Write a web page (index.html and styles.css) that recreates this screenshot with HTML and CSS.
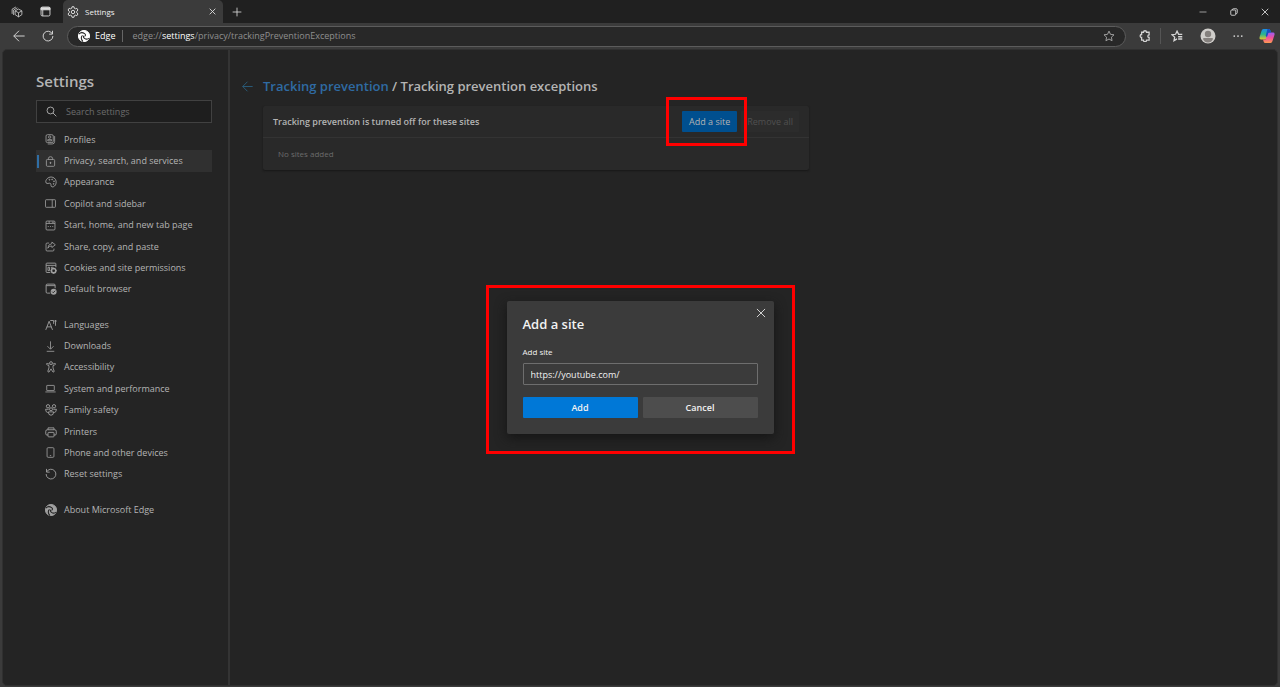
FILE: index.html
```html
<!DOCTYPE html>
<html lang="en">
<head>
<meta charset="utf-8">
<title>Settings</title>
<link rel="stylesheet" href="styles.css">
</head>
<body>
<svg class="defs" aria-hidden="true">
  <symbol id="edge" viewBox="0 0 16 16">
    <circle cx="8" cy="8" r="7.500" fill="currentColor"/>
    <path d="M1 5.500C3 3.500 6.500 3.200 8.800 4.800c2 1.500 1.200 3.200-.3 3.600M15.200 10.800c-1.800 1.400-4.700 1.600-6.600.3-1.700-1.200-1.600-2.600-.9-3.400M6 7.200C4 9 4.200 12.500 6.600 15.500" fill="none" stroke="var(--edge-gap)" stroke-width="1.400"/>
  </symbol>
  <symbol id="back" viewBox="0 0 16 16"><path d="M15.500 8H1M8 1L1 8l7 7"/></symbol>
  <symbol id="close" viewBox="0 0 16 16"><path d="M1.500 1.500l13 13M14.500 1.500l-13 13"/></symbol>
</svg>
<div class="browser">
  <header class="tabstrip">
    <button class="chrome-btn" aria-label="Workspaces"><svg class="icon i12 thin" viewBox="0 0 16 16"><path d="M5.500 6.500L10 4l4.500 2.500v5L10 14.500l-4.500-3zM5.500 6.500L10 9l4.500-2.500M10 9v5.500M3.500 12V5.300L8.500 2.400M1.500 10.500V4.200L6.500 1.300"/></svg></button>
    <button class="chrome-btn" aria-label="Tab actions"><svg class="icon i11" viewBox="0 0 16 16"><rect x="1.500" y="1.500" width="13" height="13" rx="2"/><path d="M1.500 2.500h13v3h-13z" fill="currentColor"/><path d="M4 5.500v9"/></svg></button>
    <div class="tab">
      <svg class="icon i12" viewBox="0 0 16 16"><circle cx="8" cy="8" r="2.300"/><path d="M6.700 1h2.600l.5 2.100 1.300.7 2.100-.7 1.400 2.300-1.600 1.600v2l1.600 1.600-1.400 2.300-2.100-.7-1.300.7L9.300 15H6.700l-.5-2.100-1.300-.7-2.100.7-1.400-2.300L3 9V7L1.400 5.400l1.400-2.300 2.100.7 1.300-.7z"/></svg>
      <span class="tab-title">Settings</span>
      <button class="plain tab-close" aria-label="Close tab"><svg class="icon i7"><use href="#close"/></svg></button>
    </div>
    <button class="new-tab plain" aria-label="New tab"><svg class="icon i10" viewBox="0 0 16 16"><path d="M8 1v14M1 8h14"/></svg></button>
    <div class="window-controls">
      <button class="plain" aria-label="Minimize"><svg class="icon i8" viewBox="0 0 16 16"><path d="M1 8h14"/></svg></button>
      <button class="plain" aria-label="Restore"><svg class="icon i8 bold" viewBox="0 0 16 16"><rect x="1.500" y="4" width="10" height="10.500" rx="2"/><path d="M5 4V3q0-1.500 1.500-1.500h6Q14.500 1.500 14.500 3.500v6q0 1.500-1.500 1.500h-1.500"/></svg></button>
      <button class="plain" aria-label="Close window"><svg class="icon i8 bold"><use href="#close"/></svg></button>
    </div>
  </header>
  <div class="toolbar">
    <button class="chrome-btn" aria-label="Back"><svg class="icon i12"><use href="#back"/></svg></button>
    <button class="chrome-btn" aria-label="Refresh"><svg class="icon i12" viewBox="0 0 16 16"><path d="M13.800 5.200A6.500 6.500 0 1 0 14.500 8M14 1v4.500H9.500"/></svg></button>
    <div class="address">
      <svg class="icon i12 edge-mark"><use href="#edge"/></svg>
      <span class="address-name">Edge</span>
      <span class="address-url">edge://<b>settings</b>/privacy/trackingPreventionExceptions</span>
      <button class="plain star" aria-label="Add to favorites"><svg class="icon i12" viewBox="0 0 16 16"><path d="M8 1.500l2 4.300 4.700.6-3.500 3.200.9 4.700L8 12l-4.100 2.300.9-4.700L1.300 6.400 6 5.800z"/></svg></button>
    </div>
    <div class="actions">
      <button class="plain" aria-label="Extensions"><svg class="icon i12 bold" viewBox="0 0 16 16"><path d="M3.500 3H6a2 2 0 0 1 4 0h3.500v3.500a1.600 1.600 0 1 0 0 3.500v3.500H10a2 2 0 0 1-4 0H3.500V10a2 2 0 0 1 0-4z"/></svg></button>
      <button class="plain" aria-label="Favorites"><svg class="icon i12 bold" viewBox="0 0 16 16"><path d="M8 11.800l-4 2.400.9-4.700-3.500-3.200 4.700-.6 2-4.200 2 4.200H15M9.500 9H15M9.500 12H15"/></svg></button>
      <button class="plain" aria-label="Profile"><svg class="i16" viewBox="0 0 16 16"><circle cx="8" cy="8" r="7.500" fill="#d0cecb"/><circle cx="8" cy="6" r="3.200" fill="#85817e"/><path d="M3 11q0-1 1-1h8q1 0 1 1-1.500 3.500-5 3.500T3 11z" fill="#85817e"/></svg></button>
      <button class="plain" aria-label="Settings and more"><svg class="i10" viewBox="0 0 16 16" fill="#d5d5d5"><circle cx="2" cy="8" r="1.400"/><circle cx="8" cy="8" r="1.400"/><circle cx="14" cy="8" r="1.400"/></svg></button>
      <button class="plain" aria-label="Copilot"><svg class="i16" viewBox="0 0 16 16"><defs><linearGradient id="cpa" x2="0" y2="1"><stop stop-color="#1b8ce8"/><stop offset=".5" stop-color="#28b58c"/><stop offset="1" stop-color="#e8c52c"/></linearGradient><linearGradient id="cpb" x2="0" y2="1"><stop stop-color="#9a5cf5"/><stop offset=".5" stop-color="#f0509c"/><stop offset="1" stop-color="#ff9a50"/></linearGradient></defs><path d="M4.500 1h5.200q1.300 0 1.700 1.500l.6 2H9.500L7.600 10q-.5 1.500-2 1.500H2Q0 11.500.5 9.300L2.500 3Q3 1 4.500 1z" fill="url(#cpa)"/><path d="M11.500 15H6.300q-1.300 0-1.700-1.500l-.6-2h2.500L8.400 6q.5-1.500 2-1.500H14q2 0 1.500 2.200L13.500 13q-.5 2-2 2z" fill="url(#cpb)"/><path d="M9.700 1q1.300 0 1.700 1.500l.6 2H9.500L8 9 6.600 8 8.500 1z" fill="#164fc4"/></svg></button>
    </div>
  </div>
  <div class="page">
    <aside class="sidebar">
      <h1>Settings</h1>
      <label class="search">
        <svg class="icon i11" viewBox="0 0 16 16"><circle cx="6.500" cy="6.500" r="5"/><path d="M10.200 10.200L15 15"/></svg>
        <input type="search" placeholder="Search settings" aria-label="Search settings">
      </label>
      <nav>
        <div class="group group-main">
          <a href="#"><svg class="icon i11" viewBox="0 0 16 16"><rect x="1.500" y="1" width="10.500" height="11.500" rx="2"/><circle cx="6.800" cy="4.500" r="1.700"/><path d="M4 10V8.200h5.600V10zM14 3v8q0 3.500-3.500 3.500H4"/></svg>Profiles</a>
          <a href="#" class="current" aria-current="page"><svg class="icon i11" viewBox="0 0 16 16"><rect x="2" y="5" width="12" height="10" rx="1.500"/><path d="M5 5V3.500Q5 1 8 1t3 2.500V5"/><circle cx="8" cy="10" r=".8" fill="currentColor"/></svg>Privacy, search, and services</a>
          <a href="#"><svg class="icon i12" viewBox="0 0 16 16"><path d="M1 7.500C1.500 3 6 .8 9.500 1.500c4 .8 6 4.500 5.300 8-.6 3.300-3.300 5.500-5.300 5-2.300-.5-1-3.200-2-4.300-1.400-1.500-3 .2-4.700-.3Q.8 9.500 1 7.500z"/><circle cx="6" cy="5" r=".6"/><circle cx="9.500" cy="4.500" r=".6"/><circle cx="12" cy="7" r=".6"/><circle cx="11.500" cy="10.500" r=".6"/></svg>Appearance</a>
          <a href="#"><svg class="icon i11" viewBox="0 0 16 16"><rect x=".7" y="2.500" width="14.600" height="11" rx="1"/><path d="M10.500 2.500v11"/></svg>Copilot and sidebar</a>
          <a href="#"><svg class="icon i11" viewBox="0 0 16 16"><rect x="1.500" y="1.500" width="13" height="13" rx="1.500"/><path d="M1.500 5h13M6 1.500V5M10 3.200h3M4 9.500h1.500M7.300 9.500h1.500M10.500 9.500H12"/></svg>Start, home, and new tab page</a>
          <a href="#"><svg class="icon i11" viewBox="0 0 16 16"><path d="M6 3H3Q1.500 3 1.500 4.500v8.500q0 1.500 1.500 1.500h8.500q1.500 0 1.500-1.500v-2M10 1.500l5 4-5 4V7.200Q6 7 4 10.500 4.500 4.500 10 3.800z"/></svg>Share, copy, and paste</a>
          <a href="#"><svg class="icon i12" viewBox="0 0 16 16"><path d="M7 14H2.500Q1.500 14 1.500 13V2.500q0-1 1-1h11q1 0 1 1V7M1.500 4.500h13M4 7v4.500h2V7zM8.500 9V7H11"/><circle cx="11.500" cy="11.500" r="2.900" stroke-width="2"/><path d="M11.500 7.500v2M11.500 13.500v2M7.500 11.500h2M13.500 11.500h2" stroke-width="1.600"/></svg>Cookies and site permissions</a>
          <a href="#"><svg class="icon i12" viewBox="0 0 16 16"><path d="M7 13.500H3Q1.500 13.500 1.500 12V3Q1.500 1.500 3 1.500h9Q13.500 1.500 13.500 3v4M1.500 3.500h12"/><circle cx="11.500" cy="11.500" r="4" fill="currentColor" stroke="none"/><path d="M9.500 11.500l1.500 1.500 2.600-2.700" stroke="#242424"/></svg>Default browser</a>
        </div>
        <div class="group group-more">
          <a href="#"><svg class="icon i12" viewBox="0 0 16 16"><path d="M1 14.500L5.500 3l4.500 11.500M2.500 10.500h6M7 2h4.500v4.500M14 9V1.500M14 1.500L12 3.500M14 1.500L16 3.500"/></svg>Languages</a>
          <a href="#"><svg class="icon i11" viewBox="0 0 16 16"><path d="M8 .5v11M3.500 7.500L8 12l4.500-4.500M2.500 15h11"/></svg>Downloads</a>
          <a href="#"><svg class="icon i12" viewBox="0 0 16 16"><circle cx="8" cy="2.800" r="1.900"/><path d="M5.800 4.300L3 3.200q-1.200 0-1 1.200.2.500 3.300 1.800v3L3.800 13.500q0 1.500 1.500 1.300L8 10.500l2.700 4.300q1.500.2 1.500-1.300L10.700 9.200v-3q3.100-1.300 3.300-1.800.2-1.200-1-1.200l-2.800 1.100"/></svg>Accessibility</a>
          <a href="#"><svg class="icon i11" viewBox="0 0 16 16"><rect x="2.500" y="3.500" width="11" height="7.500" rx=".5"/><path d="M.5 13h15"/></svg>System and performance</a>
          <a href="#"><svg class="icon i12" viewBox="0 0 16 16"><circle cx="4" cy="3" r="2.200"/><circle cx="12" cy="3" r="2.200"/><circle cx="8" cy="7" r="2"/><path d="M4.500 10.500h7q0 4.500-3.500 4.500t-3.500-4.500zM5 7H.8q0 4 3 4.500M11 7h4.200q0 4-3 4.500"/></svg>Family safety</a>
          <a href="#"><svg class="icon i12" viewBox="0 0 16 16"><path d="M4 12H2.500Q1 12 1 10.500V7q0-2 2-2h10q2 0 2 2v3.500q0 1.500-1.500 1.500H12M4 5V2.500h8V5"/><rect x="4" y="8.500" width="8" height="6" rx="1"/></svg>Printers</a>
          <a href="#"><svg class="icon i11" viewBox="0 0 16 16"><rect x="3" y="1" width="10" height="14" rx="1.500"/><path d="M7 12.500h2"/></svg>Phone and other devices</a>
          <a href="#"><svg class="icon i12" viewBox="0 0 16 16"><path d="M2.200 5.200A6.500 6.500 0 1 1 1.500 8M2 1.200v4.300h4.300"/></svg>Reset settings</a>
        </div>
        <div class="group">
          <a href="#"><svg class="icon i12"><use href="#edge"/></svg>About Microsoft Edge</a>
        </div>
      </nav>
    </aside>
    <main class="content">
      <div class="crumbs">
        <button class="plain crumb-back" aria-label="Back"><svg class="icon i11"><use href="#back"/></svg></button>
        <h2><a href="#">Tracking prevention</a> / Tracking prevention exceptions</h2>
      </div>
      <section class="card">
        <div class="card-head">
          <h3>Tracking prevention is turned off for these sites</h3>
          <div class="marked">
            <button class="add-site">Add a site</button>
            <div class="mark mark-button"></div>
          </div>
          <button class="remove-all" disabled>Remove all</button>
        </div>
        <p class="card-empty">No sites added</p>
      </section>
    </main>
    <div class="overlay">
      <div class="marked">
        <form class="dialog" role="dialog" aria-labelledby="dialog-title">
          <div class="dialog-head">
            <h2 id="dialog-title">Add a site</h2>
            <button type="button" class="plain" aria-label="Close"><svg class="icon i10"><use href="#close"/></svg></button>
          </div>
          <label for="site">Add site</label>
          <input id="site" type="text" value="https://youtube.com/">
          <div class="dialog-actions">
            <button type="button" class="primary">Add</button>
            <button type="button">Cancel</button>
          </div>
        </form>
        <div class="mark mark-dialog"></div>
      </div>
    </div>
  </div>
</div>
</body>
</html>
```

FILE: styles.css
```css
* { box-sizing: border-box; }

body {
  margin: 0;
  background: #3b3b3b;
  color: #b4b4b4;
  font: 9px/12px "Open Sans", "Noto Sans", sans-serif;
  --edge-gap: #242424;
}

h1, h2, h3, p { margin: 0; }
button, input { font: inherit; color: inherit; }
button { border: 0; padding: 0; }
a { color: inherit; text-decoration: none; }

.defs { position: absolute; width: 0; height: 0; }
.icon { flex: none; fill: none; stroke: currentColor; stroke-width: 1.3; }
.thin { stroke-width: 1; }
.bold { stroke-width: 1.7; }
.i7 { width: 7px; height: 7px; }
.i8 { width: 8px; height: 8px; }
.i10 { width: 10px; height: 10px; }
.i11 { width: 11px; height: 11px; }
.i12 { width: 12px; height: 12px; }
.i16 { width: 16px; height: 16px; }

.plain, .chrome-btn {
  display: flex;
  align-items: center;
  justify-content: center;
  background: none;
}
.chrome-btn { width: 28px; }

.browser { display: flex; flex-direction: column; min-height: 100vh; }

.tabstrip {
  display: flex;
  height: 23px;
  padding-left: 3px;
  background: #202020;
  color: #dedede;
}
.tab {
  display: flex;
  align-items: center;
  gap: 6px;
  width: 160px;
  margin-left: 4px;
  padding: 0 7px 0 4px;
  border-radius: 5px 5px 0 0;
  background: #3b3b3b;
}
.tab-title { flex: 1; font-size: 8px; color: #f0f0f0; }
.tab-close svg { stroke-width: 2; }
.new-tab { width: 28px; }
.window-controls { display: flex; margin-left: auto; }
.window-controls .plain { width: 31px; }

.toolbar {
  display: flex;
  align-items: center;
  height: 26px;
  padding-left: 4px;
  color: #d5d5d5;
}
.toolbar .chrome-btn { width: 29px; }
.address {
  display: flex;
  align-items: center;
  flex: 1;
  height: 21px;
  margin-left: 5px;
  padding: 0 10px;
  border: 1px solid #5c5c5c;
  border-radius: 11px;
  background: #282828;
}
.edge-mark { color: #fff; }
.address-name {
  margin-left: 5px;
  padding-right: 7px;
  border-right: 1px solid #666;
  color: #fff;
}
.address-url { flex: 1; margin-left: 9px; color: #8f8f8f; }
.address-url b { font-weight: 400; color: #fff; }
.star { color: #a0a0a0; }
.actions { display: flex; margin-left: 3px; }
.actions .plain { width: 32px; height: 16px; }
.actions .plain:first-child { border-right: 1px solid #555; }
.actions .plain:nth-child(3), .actions .plain:nth-child(4) { width: 30px; }
.actions .plain:last-child { width: 27px; }

.page {
  position: relative;
  display: flex;
  flex: 1;
  margin: 0 2px 1px;
  border: 1px solid #303030;
  border-radius: 5px;
  background: #242424;
}

.sidebar {
  width: 227px;
  padding: 21px 16px 22px 33px;
  border-right: 2px solid #343434;
}
.sidebar h1 { font-size: 15px; line-height: 20px; font-weight: 600; }
.search {
  display: flex;
  align-items: center;
  gap: 9px;
  height: 23px;
  margin: 9px 0 6px;
  padding: 0 9px;
  border: 1px solid #414141;
  background: #1e1e1e;
}
.search input {
  flex: 1;
  min-width: 0;
  padding: 0;
  border: 0;
  outline: 0;
  background: none;
}
.search input::placeholder { color: #6c6c6c; opacity: 1; }

.group { display: grid; grid-auto-rows: 1fr; min-height: 21px; margin-bottom: 14px; }
.group-main, .group-more { min-height: 171px; }
.group a {
  display: grid;
  grid-template-columns: 12px 1fr;
  align-items: center;
  justify-items: start;
  gap: 7px;
  padding-left: 9px;
}
.group svg { color: #a0a0a0; stroke-width: 1.2; }
.group .current {
  background: linear-gradient(#2f6ea5, #2f6ea5) 1px center / 2px 13px no-repeat #303030;
}

.content { flex: 1; padding: 27px 12px; }
.crumbs { display: flex; align-items: center; gap: 10px; }
.crumb-back { color: #2a5f80; }
.crumbs h2 { font-size: 13px; line-height: 18px; font-weight: 600; }
.crumbs a { color: #2f6ba3; }
.card {
  max-width: 546px;
  margin: 11px 0 0 21px;
  border-radius: 2px;
  background: #292929;
  box-shadow: 0 1px 2px #181818;
}
.card-head {
  display: flex;
  align-items: center;
  height: 32px;
  padding: 0 10px;
  border-bottom: 1px solid #333;
}
.card-head h3 { flex: 1; font-size: 9px; font-weight: 600; }
.card-head button { height: 21px; padding: 0 7px; border-radius: 1px; }
.add-site { background: #004f8f; }
.card-head .remove-all { margin-left: 4px; padding: 0 6px; background: #2c2c2c; color: #505050; }
.card-empty { padding: 10px 15px; font-size: 8px; color: #6c6c6c; }

.marked { position: relative; }
.mark { position: absolute; border: 3px solid #f00; pointer-events: none; }
.mark-button { inset: -14px -10px -14px -16px; }
.mark-dialog { inset: -16px -21px -20px; }

.overlay { position: absolute; inset: 0; display: grid; place-items: center; }
.dialog {
  display: flex;
  flex-direction: column;
  width: 267px;
  padding: 6px 16px 16px;
  border-radius: 2px;
  background: #3b3b3b;
  box-shadow: 0 4px 12px #151515;
  color: #f2f2f2;
}
.dialog-head { display: flex; justify-content: space-between; align-items: flex-start; margin-right: -8px; }
.dialog-head h2 { padding-top: 8px; font-size: 13px; line-height: 18px; font-weight: 600; }
.dialog-head .plain { height: 12px; }
.dialog label { margin: 13px 0 5px; font-size: 8px; }
.dialog input {
  height: 22px;
  padding: 0 7px;
  border: 1px solid #6e6e6e;
  border-radius: 1px;
  outline: 0;
  background: #3b3b3b;
}
.dialog-actions { display: grid; grid-template-columns: 1fr 1fr; gap: 5px; margin-top: 12px; }
.dialog-actions button { height: 21px; border-radius: 1px; background: #4d4d4d; font-weight: 600; }
.dialog-actions .primary { background: #0078d7; }
```
